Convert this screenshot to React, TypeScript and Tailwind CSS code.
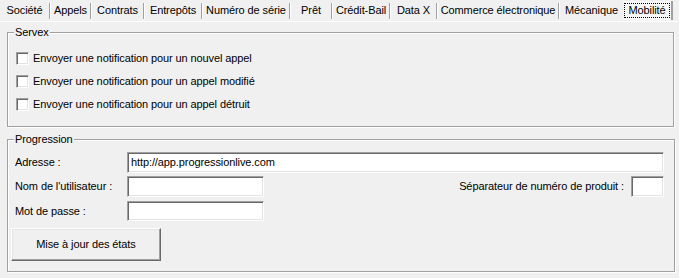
const tabs = [
  { label: "Société", w: "w-[49px]" },
  { label: "Appels", w: "w-[39px]" },
  { label: "Contrats", w: "w-[51px]" },
  { label: "Entrepôts", w: "w-[56px]" },
  { label: "Numéro de série", w: "w-[86px]" },
  { label: "Prêt", w: "w-[40px]" },
  { label: "Crédit-Bail", w: "w-[56px]" },
  { label: "Data X", w: "w-[45px]" },
  { label: "Commerce électronique", w: "w-[120px]" },
];

const sunken =
  "border border-t-[#a0a0a0] border-l-[#a0a0a0] border-b-white border-r-white shadow-[inset_1px_1px_0_#696969,inset_-1px_-1px_0_#e3e3e3] bg-white";

function Checkbox({ label }: { label: string }) {
  return (
    <div className="flex items-center h-[13px] gap-[4px]">
      <div className={`w-[13px] h-[13px] ${sunken}`}></div>
      <span>{label}</span>
    </div>
  );
}

function GroupBox({ title, className, children }: { title: string; className: string; children: React.ReactNode }) {
  return (
    <div className={`relative border border-[#a0a0a0] shadow-[inset_1px_1px_0_white,1px_1px_0_white] ${className}`}>
      <span className="absolute -top-[8px] left-[6px] px-[1px] bg-[#f0f0f0] leading-[14px]">{title}</span>
      {children}
    </div>
  );
}

export default function App() {
  return (
    <div className="w-[679px] h-[278px] bg-[#f0f0f0] text-[11px] tracking-[-0.1px] text-black overflow-hidden" style={{ fontFamily: '"Liberation Sans", Arial, sans-serif' }}>
      {/* tab strip */}
      <div className="flex h-[21px] items-center">
        {tabs.map((t) => (
          <div key={t.label} className="flex items-center h-full shrink-0">
            <div className={`${t.w} h-full flex items-center justify-center whitespace-nowrap`}>{t.label}</div>
            <div className="w-[2px] h-[16px] border-l border-l-[#a0a0a0] border-r border-r-white"></div>
          </div>
        ))}
        <div className="w-[63px] shrink-0 h-full flex items-center justify-center">Mécanique</div>
        <div className="w-[50px] shrink-0 h-[19px] flex items-center justify-center bg-[#f7f7f7] border-r-2 border-r-[#a0a0a0]">
          <span className="border border-dotted border-black px-[3px] leading-[13px]">Mobilité</span>
        </div>
      </div>
      <div className="border-t border-white h-[11px]"></div>

      <GroupBox title="Servex" className="ml-[7px] w-[667px] h-[95px] pt-[19px] pl-[8px]">
        <div className="flex flex-col gap-[10px]">
          <Checkbox label="Envoyer une notification pour un nouvel appel" />
          <Checkbox label="Envoyer une notification pour un appel modifié" />
          <Checkbox label="Envoyer une notification pour un appel détruit" />
        </div>
      </GroupBox>

      <GroupBox title="Progression" className="mt-[12px] ml-[7px] w-[668px] h-[133px] pt-[12px] pl-[3px] pr-[10px]">
        <div className="flex items-center h-[21px]">
          <span className="w-[116px] pl-[4px]">Adresse :</span>
          <div className={`flex-1 h-[21px] ${sunken} flex items-center pl-[3px]`}>http://app.progressionlive.com</div>
        </div>
        <div className="flex items-center h-[21px] mt-[3px]">
          <span className="w-[116px] pl-[4px]">Nom de l'utilisateur :</span>
          <div className={`w-[137px] h-[21px] ${sunken}`}></div>
          <span className="ml-auto mr-[7px]">Séparateur de numéro de produit :</span>
          <div className={`w-[33px] h-[21px] ${sunken}`}></div>
        </div>
        <div className="flex items-center h-[20px] mt-[4px]">
          <span className="w-[116px] pl-[4px]">Mot de passe :</span>
          <div className={`w-[137px] h-[20px] ${sunken}`}></div>
        </div>
        <button className="mt-[7px] w-[150px] h-[33px] flex items-center justify-center bg-[#f0f0f0] border border-t-white border-l-white border-b-[#696969] border-r-[#696969] shadow-[inset_-1px_-1px_0_#a0a0a0,inset_1px_1px_0_#e3e3e3]">
          Mise à jour des états
        </button>
      </GroupBox>
    </div>
  );
}
